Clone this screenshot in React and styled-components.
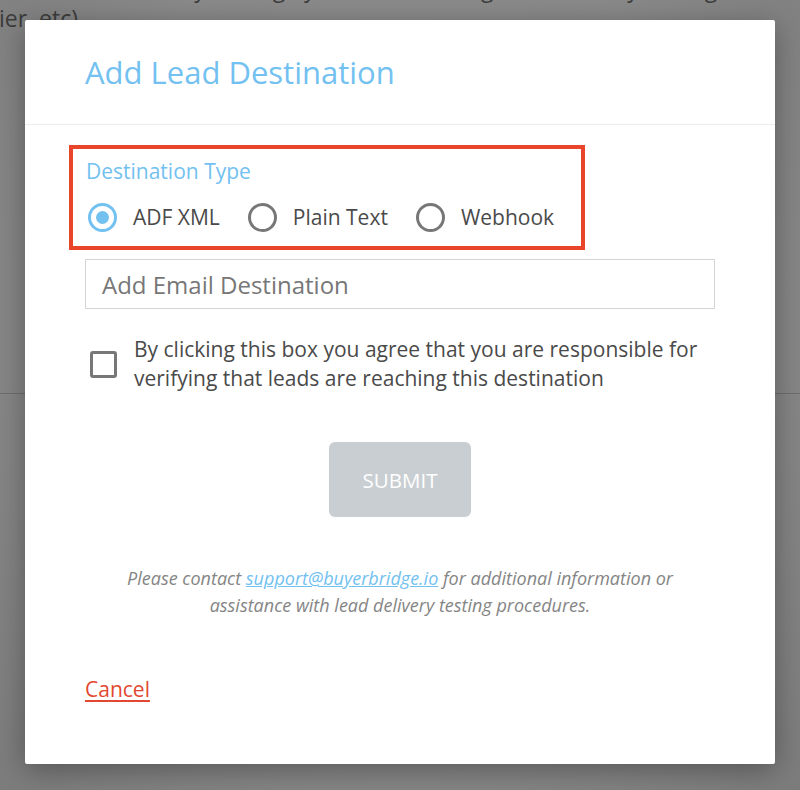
import styled, { createGlobalStyle } from 'styled-components';

const GlobalStyle = createGlobalStyle`
  html, body {
    margin: 0;
    padding: 0;
  }
  body {
    font-family: 'Open Sans', 'Liberation Sans', sans-serif;
    overflow: hidden;
  }
`;

const Page = styled.div`
  position: relative;
  width: 800px;
  height: 790px;
  overflow: hidden;
  background: radial-gradient(ellipse at 50% 40%, #8e8e8e 0%, #8a8a8a 60%, #7c7c7c 100%);
`;

const BackText = styled.p`
  margin: 0;
  font-size: 23px;
  line-height: 30px;
  color: #3c3c3c;
  white-space: nowrap;
  margin-top: ${({ shift }) => shift || 0}px;
  margin-left: ${({ indent }) => indent || 0}px;
`;

const BackRule = styled.div`
  margin-top: 360px;
  height: 1px;
  background: #6e6e6e;
`;

const Modal = styled.div`
  position: absolute;
  left: 25px;
  top: 20px;
  width: 750px;
  height: 744px;
  background: #fff;
  border-radius: 2px;
  box-shadow: 0 6px 30px rgba(0, 0, 0, 0.35);
  display: flex;
  flex-direction: column;
`;

const Header = styled.div`
  height: 105px;
  border-bottom: 1px solid #ececec;
  display: flex;
  align-items: center;
  padding: 0 60px;
  box-sizing: border-box;
`;

const Title = styled.h2`
  margin: 0;
  font-size: 31px;
  font-weight: 400;
  color: #72c1f0;
`;

const Body = styled.div`
  padding: 20px 60px 0;
  display: flex;
  flex-direction: column;
`;

const TypeGroup = styled.div`
  align-self: flex-start;
  margin-left: -16px;
  width: 516px;
  box-sizing: border-box;
  border: 4px solid #e8452b;
  padding: 9px 13px 14px;
  display: flex;
  flex-direction: column;
  gap: 19px;
`;

const GroupLabel = styled.div`
  font-size: 21px;
  line-height: 26px;
  color: #72c1f0;
`;

const RadioRow = styled.div`
  display: flex;
  align-items: center;
  gap: 28px;
  padding-left: 2px;
`;

const RadioOption = styled.label`
  display: flex;
  align-items: center;
  gap: 16px;
  font-size: 21px;
  line-height: 29px;
  color: #4a4a4a;
`;

const RadioCircle = styled.span`
  width: 29px;
  height: 29px;
  box-sizing: border-box;
  border-radius: 50%;
  border: 3px solid ${({ checked }) => (checked ? '#72c1f0' : '#777')};
  display: flex;
  align-items: center;
  justify-content: center;
  &::after {
    content: '';
    width: 13px;
    height: 13px;
    border-radius: 50%;
    background: ${({ checked }) => (checked ? '#72c1f0' : 'transparent')};
  }
`;

const EmailInput = styled.div`
  margin-top: 9px;
  height: 50px;
  box-sizing: border-box;
  border: 1px solid #d3d6d9;
  display: flex;
  align-items: center;
  padding: 0 16px;
  font-size: 24px;
  color: #777;
`;

const AgreeRow = styled.div`
  margin-top: 26px;
  display: flex;
  align-items: center;
  gap: 17px;
  padding-left: 5px;
`;

const CheckBox = styled.span`
  flex: none;
  width: 27px;
  height: 27px;
  box-sizing: border-box;
  border: 3px solid #777;
  border-radius: 3px;
`;

const AgreeText = styled.div`
  font-size: 21px;
  line-height: 29px;
  color: #4a4a4a;
`;

const SubmitButton = styled.button`
  align-self: center;
  margin-top: 49px;
  width: 142px;
  height: 75px;
  border: none;
  border-radius: 6px;
  background: #c9ced3;
  color: #fff;
  font-family: 'Open Sans', 'Liberation Sans', sans-serif;
  font-size: 20.5px;
`;

const Note = styled.p`
  margin: 48px 0 0;
  text-align: center;
  font-style: italic;
  font-size: 18px;
  line-height: 27px;
  color: #858585;
`;

const MailLink = styled.a`
  color: #72c1f0;
  text-decoration: underline;
`;

const CancelLink = styled.a`
  align-self: flex-start;
  margin-top: 56px;
  font-size: 21px;
  color: #e2472f;
  text-decoration: underline;
  text-underline-offset: 3px;
`;

const types = [
  { name: 'ADF XML', checked: true },
  { name: 'Plain Text', checked: false },
  { name: 'Webhook', checked: false },
];

export default function App() {
  return (
    <Page>
      <GlobalStyle />
      <BackText shift={-27} indent={60}>
        Automatically manage your leads through the delivery settings as needed
      </BackText>
      <BackText indent={-1}>ier, etc)</BackText>
      <BackRule />
      <Modal>
        <Header>
          <Title>Add Lead Destination</Title>
        </Header>
        <Body>
          <TypeGroup>
            <GroupLabel>Destination Type</GroupLabel>
            <RadioRow>
              {types.map((t) => (
                <RadioOption key={t.name}>
                  <RadioCircle checked={t.checked} />
                  {t.name}
                </RadioOption>
              ))}
            </RadioRow>
          </TypeGroup>
          <EmailInput>Add Email Destination</EmailInput>
          <AgreeRow>
            <CheckBox />
            <AgreeText>
              By clicking this box you agree that you are responsible for verifying that leads are reaching this
              destination
            </AgreeText>
          </AgreeRow>
          <SubmitButton>SUBMIT</SubmitButton>
          <Note>
            Please contact <MailLink>support@buyerbridge.io</MailLink> for additional information or
            <br />
            assistance with lead delivery testing procedures.
          </Note>
          <CancelLink>Cancel</CancelLink>
        </Body>
      </Modal>
    </Page>
  );
}
